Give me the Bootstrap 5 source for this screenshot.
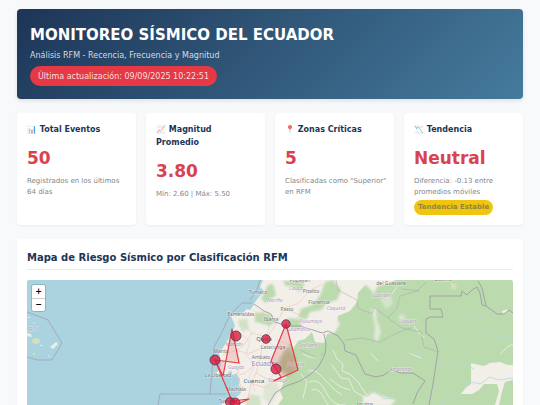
<!DOCTYPE html>
<html lang="es">
<head>
<meta charset="utf-8">
<meta name="viewport" content="width=device-width, initial-scale=1">
<title>Monitoreo Sísmico del Ecuador</title>
<link href="https://cdn.jsdelivr.net/npm/bootstrap@5.3.0/dist/css/bootstrap.min.css" rel="stylesheet">
<style>
body { font-family: "DejaVu Sans", Verdana, sans-serif; background: #f8f9fb; font-size: 8px; line-height: 13px; color: #1d3557; overflow-x: hidden; }
.page { padding: 9px 17px; }
.hero { background: linear-gradient(135deg, #1d3557, #457b9d); border-radius: 4px; padding: 16px 13px 13px; margin-bottom: 14px; box-shadow: 0 2px 4px rgba(0,0,0,.1); color: #fff; }
.hero h1 { font-size: 15px; line-height: 20px; font-weight: 700; margin-bottom: 4px; }
.hero p { color: #d5dce4; margin-bottom: 4px; }
.updated { display: inline-block; background: #e63946; color: #fbdcdf; border-radius: 10px; padding: 4px 8px 3px; }
.stats { gap: 10px; margin-bottom: 14px; }
.stat, .panel { background: #fff; border-radius: 4px; box-shadow: 0 1px 3px rgba(0,0,0,.05); padding: 10px; }
.stat { flex: 1 1 0; min-width: 0; min-height: 112px; }
.stat h2 { font-size: 8px; line-height: 13px; font-weight: 700; margin-bottom: 7px; }
.stat h2 span { opacity: .8; }
.figure-value { font-size: 17px; line-height: 30px; font-weight: 700; color: #d9424e; margin-bottom: 3px; }
.stat p { font-size: 7px; line-height: 11px; color: #7f868c; margin: 0 -3px 2px 0; }
.trend { display: inline-block; background: #f1c40f; color: #8f8540; font-size: 7px; line-height: 11px; font-weight: 700; border-radius: 8px; padding: 2px 4px; }
.panel h2 { font-size: 10px; line-height: 18px; font-weight: 700; padding-bottom: 2px; border-bottom: 1px solid #e9ecef; margin-bottom: 10px; }
.map { border-radius: 3px; overflow: hidden; background: #aad3df; }
.map svg { width: 100%; height: auto; }
.zoomer { top: 4px; left: 4px; border: 1px solid #8fb5c1; border-radius: 3px; overflow: hidden; }
.zoomer button { width: 13px; height: 13px; padding: 0; border: 0; background: #fff; color: #000; font-size: 8px; line-height: 12px; font-weight: 700; }
.zoomer button + button { border-top: 1px solid #ccc; }
svg text { font-family: "Noto Sans", "DejaVu Sans", sans-serif; text-anchor: middle; stroke: #fff; stroke-opacity: .5; stroke-width: 1px; paint-order: stroke; }
.town { fill: #707070; font-size: 5px; }
.region { fill: #b297bb; font-size: 5px; font-style: italic; }
</style>
</head>
<body>
<main class="page container-fluid">
  <header class="hero">
    <h1>MONITOREO SÍSMICO DEL ECUADOR</h1>
    <p>Análisis RFM - Recencia, Frecuencia y Magnitud</p>
    <div class="updated">Última actualización: 09/09/2025 10:22:51</div>
  </header>

  <section class="stats d-flex">
    <article class="stat">
      <h2><span>📊</span> Total Eventos</h2>
      <div class="figure-value">50</div>
      <p>Registrados en los últimos 64 días</p>
    </article>
    <article class="stat">
      <h2><span>📈</span> Magnitud Promedio</h2>
      <div class="figure-value">3.80</div>
      <p>Mín: 2.60 | Máx: 5.50</p>
    </article>
    <article class="stat">
      <h2><span>📍</span> Zonas Críticas</h2>
      <div class="figure-value">5</div>
      <p>Clasificadas como "Superior" en RFM</p>
    </article>
    <article class="stat">
      <h2><span>📉</span> Tendencia</h2>
      <div class="figure-value">Neutral</div>
      <p>Diferencia: -0.13 entre promedios móviles</p>
      <span class="trend">Tendencia Estable</span>
    </article>
  </section>

  <section class="panel">
    <h2>Mapa de Riesgo Sísmico por Clasificación RFM</h2>
    <div class="map position-relative">
      <svg class="d-block" viewBox="27 280 486 150" role="img" aria-label="Mapa de riesgo sísmico">
        <defs>
          <filter id="soft" x="-10%" y="-10%" width="120%" height="120%"><feGaussianBlur stdDeviation="1"/></filter>
          <filter id="haze" x="-20%" y="-20%" width="140%" height="140%"><feGaussianBlur stdDeviation="2"/></filter>
        </defs>
        <rect x="27" y="280" width="486" height="180" fill="#aad3df"/>
        <!-- mainland -->
        <path id="coast" fill="#f2eee8" d="M263 280L260 287 264 291 259 297 255 302 253 306 250 310 247 309 243 313 236 315 231 316 233 321 235 326 232 332 229 338 226 343 222 349 219 353 220 359 221 365 219 369 216 374 222 377 227 374 231 370 233 376 231 382 236 388 240 386 241 393 236 397 229 399 222 404 221 415 230 430 240 460H513V280Z"/>
        <path fill="#aad3df" d="M230 378L236 373 240 379 238 389 233 386Z"/>
        <!-- forest -->
        <path fill="#bbdbaf" d="M513 280H396L385 285 377 282 366 284 358 293 357 302 350 311 338 316 335 331 327 334 324 343 315 342 312 332 305 339 298 341 293 349 292 359 288 364 286 377 280 391 283 398 278 405 268 410V460H513Z"/>
        <g fill="#bbdbaf" filter="url(#soft)">
          <path d="M283 281L298 281 305 284 299 292 293 286 286 286Z"/>
          <path d="M268 285L273 284 276 295 266 303 261 299Z"/>
          <path d="M259 313L269 314 276 321 270 326 260 323Z"/>
          <path d="M325 282L333 280 341 290 337 300 327 303 321 310 310 312 306 320 298 317 301 309 312 305 320 296Z"/>
          <path d="M238 320L247 319 249 328 243 332 239 326Z" opacity=".6"/>
          <path d="M288 318L300 319 302 327 294 331 288 326Z"/>
          <path d="M255 313L264 312 263 323 255 322Z"/>
          <path d="M229 337L235 333 238 341 232 347Z" opacity=".6"/>
          <path d="M264 385L275 380 280 389 271 404 263 399Z" opacity=".35"/>
          <path d="M249 394L260 396 261 410 245 407Z" opacity=".6"/>
          <path d="M283 351L291 344 293 350 287 362 282 365Z"/>
        </g>
        <path fill="#b0bf94" filter="url(#haze)" d="M281 356L289 349 294 354 297 367 291 376 281 373 277 364Z"/>
        <!-- clearings -->
        <g fill="#f2eee8" filter="url(#soft)">
          <path d="M360 280H389L377 287 374 293 368 287Z"/>
          <path d="M336 318L340 324 334 333 325 333 330 325Z"/>
          <path d="M371 309L376 307 377 321 381 331 378 342 374 339 375 326Z" opacity=".7"/>
          <path d="M380 299L391 296 393 304 386 309Z" opacity=".5"/>
          <path d="M398 317L402 313 406 318 401 323Z" opacity=".5"/>
          <path d="M363 397L373 392 385 397 396 400 390 406 363 406Z"/>
        </g>
        <path fill="#f2eee8" d="M471 363L484 366 490 363 500 362 508 365H513V380L505 382 502 392 499 405H495L499 391 497 384 484 384 479 390 472 394H461L465 388 471 384ZM502 311L508 309 507 312 503 314Z"/>
        <path fill="#d4dfb4" d="M451 283L457 284 456 290 451 289Z"/>
        <g fill="none" stroke="#e9eee3" stroke-width=".9" stroke-linecap="round">
          <path d="M303 354Q317 361 320 356M333 350L337 359 343 364 342 371 350 374 358 382 366 394M308 371Q315 368 323 378L336 391 342 395M309 382Q319 377 326 392T345 405M312 390Q319 386 325 400L328 405M332 365L341 378 349 379 354 391 366 398M330 379L341 387 350 390M371 354L378 361M501 353Q507 346 513 344M392 294L397 287M414 326L420 334 424 337M409 353L421 358M301 374L307 382 303 398"/>
        </g>
        <g fill="none" stroke="#b5d8dc" stroke-width=".8">
          <path d="M480 330L490 334 503 338 513 336M436 364L453 363 466 365 474 369M461 393L471 382 480 384 490 377 498 380 513 378M366 397L375 391 384 399 400 397M440 405L448 396 461 394M409 353L428 356M468 314L481 319"/>
        </g>
        <!-- roads -->
        <g fill="none" stroke="#f2c9bd" stroke-width=".7">
          <path d="M284 308L277 323 267 337 262 347 260 360 256 373 251 383 247 404M267 337L252 333 242 323M262 348L248 354 237 350 223 355M237 350L240 365 237 375 242 390 235 402M260 361L245 373 239 375M252 333L244 345 237 350M256 373L269 380 273 375M284 308L297 304 310 291 322 284M277 323L265 320 253 310M251 383L265 388 275 381M286 309L302 316"/>
        </g>
        <!-- borders -->
        <g fill="none" stroke="#9f97a6" stroke-width=".8" opacity=".85">
          <path d="M27 312L48 320 62 343 52 360 37 360 27 357"/>
          <path d="M252 303H242L230 315 221 334 214 347 210 394"/>
          <path d="M158 405L160 394H226M260 280L257 290 250 300"/>
          <path d="M254 304L264 311 271 314 275 322 287 326 300 326 313 330 322 333 328 331 338 336 344 344 345 351 356 355 361 366 365 374 376 377 384 375 391 370 401 373 413 373 425 381 417 393 413 404" stroke-width="1"/>
          <path d="M324 334L326 344 325 354 319 366 311 374 300 381 286 386 275 393 268 405" stroke-width="1"/>
          <path d="M430 309V296H461L462 291 467 295 472 290 477 287 480 293 482 305 486 306 497 314 504 314 509 310 513 313M430 309L441 309 443 317 430 317 426 319V333L434 339 438 351 433 384 429 405M478 281L482 288 486 306" stroke-width="1"/>
          <path d="M336 280L338 290 357 300 358 308 372 314 374 307 388 318 397 308 400 296 417 291 426 282M388 318L402 328 421 332 424 347 438 352M345 340L362 338 379 342 397 333 411 328M300 350L317 358 324 353M401 289L420 291" opacity=".6"/>
          <path d="M240 333L250 341 246 355 255 365 249 377 255 391M269 325L267 340 278 350 273 364M276 340L291 345" opacity=".25"/>
        </g>
        <!-- Galápagos -->
        <g fill="#edefe2"><path d="M27 333L31 334 32 337 27 336ZM50 347L56 342 58 344 53 349ZM33 322L35 323 34 324ZM48 355L50 356 49 357ZM40 345H42V346H40ZM28 317H30V318H28Z"/><ellipse cx="36" cy="341" rx="4" ry="3" fill="#d3debb"/><circle cx="34" cy="354" r="1.3" fill="#d3debb"/></g>
        <!-- labels -->
        <g class="region">
          <text x="29" y="330">ápagos</text><text x="275" y="302">Nariño</text><text x="296" y="290">Cauca</text><text x="336" y="310">Caquetá</text><text x="311" y="323">Putumayo</text><text x="298" y="331">Sucumbíos</text><text x="308" y="347">Orellana</text><text x="296" y="366">Pastaza</text><text x="236" y="369">Guayas</text><text x="234" y="346">Manabí</text><text x="278" y="382">Santiago</text><text x="381" y="297">Guaviare</text><text x="409" y="323">Vaupés</text><text x="401" y="371">Amazonas</text>
        </g>
        <text x="265" y="366" fill="#a285b2" font-size="7">Ecuador</text>
        <g class="town">
          <text x="300" y="282">Popayán</text><text x="391" y="285">del Guaviare</text><text x="443" y="281">Guainía</text><text x="258" y="294">Tumaco</text><text x="311" y="293">Pitalito</text><text x="319" y="304">Florencia</text><text x="287" y="311">Pasto</text><text x="241" y="316">Esmeraldas</text><text x="271" y="321">Ibarra</text><text x="221" y="353">Manta</text><text x="273" y="349">Latacunga</text><text x="261" y="359">Ambato</text><text x="218" y="377">La Libertad</text><text x="236" y="391">Machala</text><text x="228" y="403">Tumbes</text><text x="365" y="406">Iquitos</text>
        </g>
        <text x="254" y="383" fill="#555" font-size="6">Cuenca</text><text x="264" y="341" fill="#555" font-size="6">Quito</text>
        <!-- risk zones -->
        <g fill="#e63946" fill-opacity=".16" stroke="#e63946" stroke-width="1.2" stroke-linejoin="round">
          <path d="M239 363L232 329 223 376 215 360Z"/>
          <path d="M286 324L271 361 281 377 274 381 298 370Z"/>
          <path d="M215 360L232 401 249 399 238 404 232 401Z"/>
        </g>
        <g fill="#dc143c" fill-opacity=".76" stroke="#5b3e51" stroke-width=".9">
          <circle cx="236" cy="336" r="5"/><circle cx="215" cy="360" r="5"/><circle cx="266" cy="339" r="4.3"/><circle cx="286" cy="324" r="4.2"/><circle cx="276" cy="369" r="5"/><circle cx="230" cy="402" r="4.5"/><circle cx="235" cy="403" r="5"/>
        </g>
      </svg>
      <div class="zoomer position-absolute d-flex flex-column">
        <button type="button" aria-label="Acercar">+</button>
        <button type="button" aria-label="Alejar">−</button>
      </div>
    </div>
  </section>
</main>
<script src="https://cdn.jsdelivr.net/npm/bootstrap@5.3.0/dist/js/bootstrap.bundle.min.js"></script>
</body>
</html>
